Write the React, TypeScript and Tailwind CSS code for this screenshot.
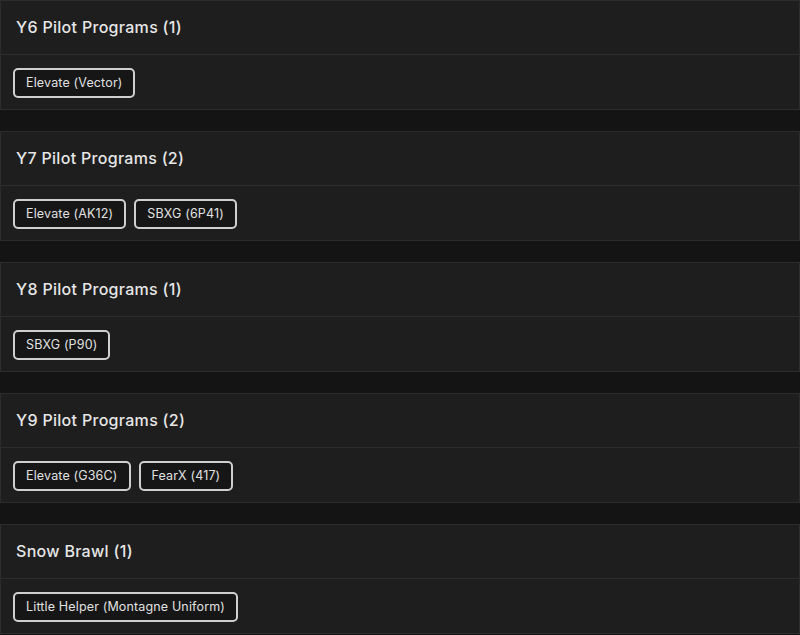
const groups = [
  { title: 'Y6 Pilot Programs (1)', items: ['Elevate (Vector)'] },
  { title: 'Y7 Pilot Programs (2)', items: ['Elevate (AK12)', 'SBXG (6P41)'] },
  { title: 'Y8 Pilot Programs (1)', items: ['SBXG (P90)'] },
  { title: 'Y9 Pilot Programs (2)', items: ['Elevate (G36C)', 'FearX (417)'] },
  { title: 'Snow Brawl (1)', items: ['Little Helper (Montagne Uniform)'] },
]

export default function App() {
  return (
    <div
      className="min-h-[635px] bg-[#141414] flex flex-col gap-[21px] text-[#e6e6e6]"
      style={{ fontFamily: 'Inter, "Noto Sans", sans-serif' }}
    >
      {groups.map(g => (
        <div key={g.title} className="bg-[#1e1e1e] border border-[#2c2c2c]">
          <div className="h-[54px] flex items-center px-[15px] pb-[2px] border-b border-[#2c2c2c]">
            <h3 className="text-[16px] font-medium tracking-[0.3px]">{g.title}</h3>
          </div>
          <div className="h-[54px] flex items-center gap-2 px-3 pt-[2px]">
            {g.items.map(item => (
              <span
                key={item}
                className="h-[30px] flex items-center px-[11px] border-2 border-[#cfcfcf] rounded-[5px] bg-[#161616] text-[12.5px] tracking-[0.15px] text-[#e0e0e0]"
              >
                {item}
              </span>
            ))}
          </div>
        </div>
      ))}
    </div>
  )
}
